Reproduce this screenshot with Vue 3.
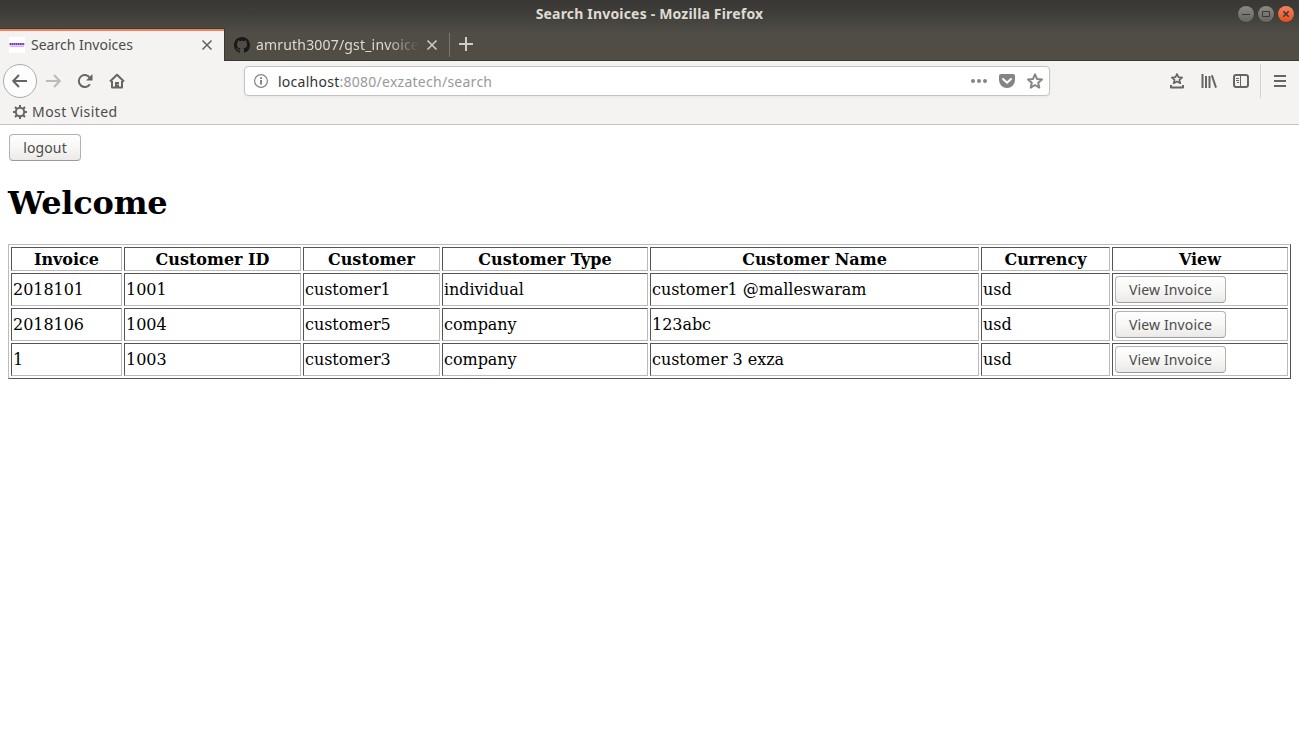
<script setup>
const columns = [
  { label: 'Invoice', width: 111 },
  { label: 'Customer ID', width: 177 },
  { label: 'Customer', width: 137 },
  { label: 'Customer Type', width: 206 },
  { label: 'Customer Name', width: 329 },
  { label: 'Currency', width: 129 },
  { label: 'View', width: 176 },
]
const invoices = [
  ['2018101', '1001', 'customer1', 'individual', 'customer1 @malleswaram', 'usd'],
  ['2018106', '1004', 'customer5', 'company', '123abc', 'usd'],
  ['1', '1003', 'customer3', 'company', 'customer 3 exza', 'usd'],
]
</script>

<template>
  <div class="window">
    <header class="titlebar">
      <div class="title">Search Invoices - Mozilla Firefox</div>
      <div class="controls">
        <span class="control"><svg width="16" height="16" viewBox="0 0 16 16"><path d="M4 8.5h8" /></svg></span>
        <span class="control"><svg width="16" height="16" viewBox="0 0 16 16"><path d="M4.5 5.500h7v5h-7z" /></svg></span>
        <span class="control close"><svg width="16" height="16" viewBox="0 0 16 16"><path d="M5.300 5.300l5.400 5.400M10.700 5.300l-5.400 5.400" /></svg></span>
      </div>
    </header>

    <nav class="tabs">
      <div class="tab active">
        <svg class="favicon" width="16" height="16" viewBox="0 0 16 16">
          <rect width="16" height="16" fill="#fff" />
          <path d="M.5 7.200h15" stroke="#7a35dc" stroke-width="2.200" stroke-dasharray="1.800 .3" />
          <path d="M1 9.500h14" stroke="#c9a4ee" stroke-width=".8" />
        </svg>
        <span class="tab-label first">Search Invoices</span>
        <svg class="tab-close" width="12" height="12" viewBox="0 0 12 12"><path d="M1.500 1.500l9 9M10.500 1.500l-9 9" /></svg>
      </div>
      <div class="tab idle">
        <svg class="favicon" width="16" height="16" viewBox="0 0 16 16">
          <path fill="#191717" d="M8 0C3.580 0 0 3.580 0 8c0 3.540 2.290 6.530 5.470 7.590.4.070.55-.17.55-.38 0-.19-.01-.82-.01-1.490-2.010.37-2.530-.49-2.690-.94-.09-.23-.48-.94-.82-1.130-.28-.15-.68-.52-.01-.53.63-.01 1.080.58 1.230.82.72 1.210 1.870.87 2.330.66.07-.52.28-.87.51-1.070-1.780-.2-3.640-.89-3.640-3.950 0-.87.31-1.590.82-2.150-.08-.2-.36-1.020.08-2.120 0 0 .67-.21 2.200.82.64-.18 1.320-.27 2-.27s1.360.09 2 .27c1.530-1.040 2.200-.82 2.200-.82.44 1.100.16 1.920.08 2.120.51.56.82 1.270.82 2.150 0 3.070-1.870 3.750-3.650 3.950.29.25.54.73.54 1.480 0 1.070-.01 1.930-.01 2.200 0 .21.15.46.55.38A8.010 8.010 0 0 0 16 8c0-4.420-3.580-8-8-8z" />
        </svg>
        <span class="tab-label second">amruth3007/gst_invoices</span>
        <svg class="tab-close" width="12" height="12" viewBox="0 0 12 12"><path d="M1.500 1.500l9 9M10.500 1.500l-9 9" /></svg>
      </div>
      <svg class="new-tab" width="14" height="14" viewBox="0 0 14 14"><path d="M7 0v14M0 7h14" /></svg>
    </nav>

    <div class="toolbar">
      <div class="nav-buttons">
        <span class="back"><svg width="16" height="16" viewBox="0 0 16 16"><path d="M15 8H1.500M7 2L1.200 8L7 14" /></svg></span>
        <svg class="forward" width="16" height="16" viewBox="0 0 16 16"><path d="M1 8h13.500M9 2l5.800 6L9 14" /></svg>
        <svg width="16" height="16" viewBox="0 0 16 16"><path d="M12.900 11.200A6 6 0 1 1 12.700 4.500" /><path class="solid" d="M15.500 1v6.500H9z" /></svg>
        <svg width="16" height="16" viewBox="0 0 16 16"><path d="M1 8.500L8 1.700L15 8.500M3 8v6.500h10V8" /><path class="solid" d="M6 9h4v6H6z" /><path class="door" d="M8.500 11.500h1" /></svg>
      </div>

      <div class="urlbar">
        <svg class="info" width="14" height="14" viewBox="0 0 14 14"><circle cx="7" cy="7" r="6.400" /><path class="stem" d="M7 6v4.600M7 3.200v1.700" /></svg>
        <span class="url"><b>localhost</b>:8080/exzatech/search</span>
        <svg class="dots" width="16" height="16" viewBox="0 0 16 16"><circle cx="2" cy="8" r="2" /><circle cx="8" cy="8" r="2" /><circle cx="14" cy="8" r="2" /></svg>
        <svg class="pocket" width="16" height="16" viewBox="0 0 16 16"><path d="M2 1h12a2 2 0 0 1 2 2v4a8 8 0 0 1-16 0V3a2 2 0 0 1 2-2z" /><path class="check" d="M4 6l4 3.800L12 6" /></svg>
        <svg class="star" width="16" height="16" viewBox="0 0 16 16"><path d="M8 1.300l2 4.600 5 .5-3.800 3.300 1.100 4.900L8 12l-4.300 2.600 1.100-4.900L1 6.400l5-.5z" /></svg>
      </div>

      <div class="tools">
        <svg width="16" height="16" viewBox="0 0 16 16"><path class="thin" d="M8 1l1.500 3.200 3.600.3-2.700 2.400.9 3.400L8 8.500l-3.300 1.800.9-3.400-2.700-2.400 3.600-.3z" /><path d="M2 12v2.500h12V12" /></svg>
        <svg width="16" height="16" viewBox="0 0 16 16"><path d="M1.500 1v14M5 3v12M8.500 3v12M10.800 2.200L15 14.600" /></svg>
        <svg width="16" height="16" viewBox="0 0 16 16"><rect x="1" y="2" width="14" height="12" rx="2.200" /><path class="hair" d="M7.500 2v12M3 5.500h3M3 7.500h3M4 9.500h2" /></svg>
      </div>
      <div class="menu"><svg width="14" height="14" viewBox="0 0 14 14"><path d="M1 2h12M1 7h12M1 12h12" /></svg></div>
    </div>

    <div class="bookmarks">
      <svg width="14" height="14" viewBox="0 0 14 14"><circle cx="7" cy="7" r="4.200" /><path d="M7 0v2.500M7 11.500V14M0 7h2.500M11.500 7H14M2 2l2 2M10 10l2 2M12 2l-2 2M4 10l-2 2" /></svg>
      <span>Most Visited</span>
    </div>

    <main class="page">
      <button class="button logout"><span>logout</span></button>
      <h1>Welcome</h1>
      <table>
        <colgroup><col v-for="c in columns" :key="c.label" :style="{ width: c.width + 'px' }"></colgroup>
        <thead>
          <tr><th v-for="c in columns" :key="c.label">{{ c.label }}</th></tr>
        </thead>
        <tbody>
          <tr v-for="row in invoices" :key="row[0]">
            <td v-for="(value, i) in row" :key="i">{{ value }}</td>
            <td><button class="button view"><span>View Invoice</span></button></td>
          </tr>
        </tbody>
      </table>
    </main>
  </div>
</template>

<style>
html, body { margin: 0; background: #fff; overflow: hidden; }
</style>

<style scoped>
* { box-sizing: border-box; }
.window { width: 1299px; height: 741px; font: 14px/20px "Noto Sans", sans-serif; color: #4c4c4c; background: #fff; }
svg { display: block; flex: none; fill: none; }

.titlebar { height: 28px; display: grid; grid-template-columns: 1fr auto 1fr; align-items: center; background: linear-gradient(#393834, #3e3d39 45%, #4b4943); }
.title { grid-column: 2; color: #dfdbd2; font-weight: 700; font-size: 14px; letter-spacing: .18px; white-space: nowrap; }
.controls { display: flex; gap: 4px; justify-self: end; padding-right: 5px; }
.control { width: 16px; height: 16px; border-radius: 50%; background: linear-gradient(#8a8982, #66655f); box-shadow: 0 0 0 .5px #33322e; }
.control svg { stroke: #393834; stroke-width: 1; }
.close { background: linear-gradient(#f58360, #e2501f); }
.close svg { stroke-width: 1.500; }

.tabs { height: 33px; display: flex; background: linear-gradient(#4b4943, #504d45 15%); border-bottom: 1px solid #3a3934; }
.tab { display: flex; align-items: center; white-space: nowrap; }
.active { height: 33px; width: 225px; padding: 0 11px 1px 9px; border-top: 1px solid #3a3934; border-right: 1px solid #3a3934; background: #f4f3f1; box-shadow: inset 0 2px #f0825a; }
.idle { width: 225px; padding: 1px 12px 0 9px; position: relative; }
.idle::after { content: ""; position: absolute; right: 0; top: 5px; width: 1px; height: 24px; background: #79766e; }
.tab-label { margin-left: 6px; flex: 1; overflow: hidden; }
.second { color: #dfdbd2; margin-right: 7px; letter-spacing: .18px; mask-image: linear-gradient(to right, #000 80%, transparent); }
.tab-close { stroke: #62615d; stroke-width: 1.500; }
.idle .tab-close { stroke: #d0cdc5; }
.new-tab { margin: 9px 0 0 9px; stroke: #d0cdc5; stroke-width: 2; }

.toolbar { height: 40px; display: flex; align-items: center; background: #f4f3f1; }
.toolbar svg { stroke: #666563; stroke-width: 2; stroke-linejoin: round; }
.nav-buttons { width: 244px; padding-left: 3px; display: flex; align-items: center; gap: 16px; }
.back { width: 34px; height: 34px; margin-right: -8px; display: grid; place-items: center; border: 1px solid #adaba8; border-radius: 50%; background: #fdfdfd; }
.toolbar .forward { stroke: #bcbbb9; }
.solid { fill: #666563; stroke: none; }
.door { stroke: #f4f3f1; stroke-width: 1; }
.urlbar { width: 806px; height: 30px; padding: 0 6px 0 9px; display: flex; align-items: center; border: 1px solid #c5c3c0; border-radius: 4px; background: #fff; box-shadow: 0 1px 3px #0000000d; }
.url { flex: 1; margin-left: 10px; padding-top: 1px; color: #999; letter-spacing: .26px; white-space: nowrap; }
.url b { font-weight: 400; color: #333; }
.toolbar .info { stroke: #858585; stroke-width: 1.200; }
.info .stem { stroke-width: 2; }
.toolbar .dots { fill: #858585; stroke: none; }
.toolbar .pocket { margin-left: 12px; fill: #858585; stroke: none; }
.pocket .check { fill: none; stroke: #fff; stroke-width: 2; stroke-linecap: round; }
.toolbar .star { margin-left: 12px; stroke: #858585; }
.tools { margin-left: 119px; display: flex; gap: 16px; }
.thin { stroke-width: 1.700; }
.hair { stroke-width: 1; }
.menu { margin-left: 11px; height: 34px; padding-left: 12px; display: flex; align-items: center; border-left: 1px solid #d5d3d0; }

.bookmarks { height: 24px; padding: 0 0 1px 13px; display: flex; align-items: center; gap: 5px; letter-spacing: .43px; background: #f4f3f1; border-bottom: 1px solid #c5c3c0; }
.bookmarks svg { stroke: #666563; stroke-width: 2; }

.page { padding: 9px 8px 0; font: 16px/19px "DejaVu Serif", serif; color: #000; }
.button { display: block; height: 27px; margin: 0; padding: 0; border: 1px solid #b4b2af; border-bottom-color: #9d9b98; border-radius: 4px; background: linear-gradient(#fefefe, #f8f8f7 45%, #ebeae8); color: #4c4c4c; font: 14px/20px "Noto Sans", sans-serif; letter-spacing: .13px; white-space: nowrap; }
.logout { width: 72px; margin-left: 1px; }
.view { width: 111px; margin-left: 1px; }
h1 { margin: 23px 0 22px; font-size: 32px; line-height: 38px; font-weight: 700; letter-spacing: -.2px; }
table { width: 1283px; table-layout: fixed; border-collapse: separate; border-spacing: 2px; border: 1px solid; border-color: #bbb #555 #555 #bbb; }
th, td { padding: 1px; border: 1px solid; border-color: #555 #bbb #bbb #555; vertical-align: middle; white-space: nowrap; }
th { height: 24px; text-align: center; font-weight: 700; }
td { height: 33px; text-align: left; letter-spacing: -.04px; }
</style>
